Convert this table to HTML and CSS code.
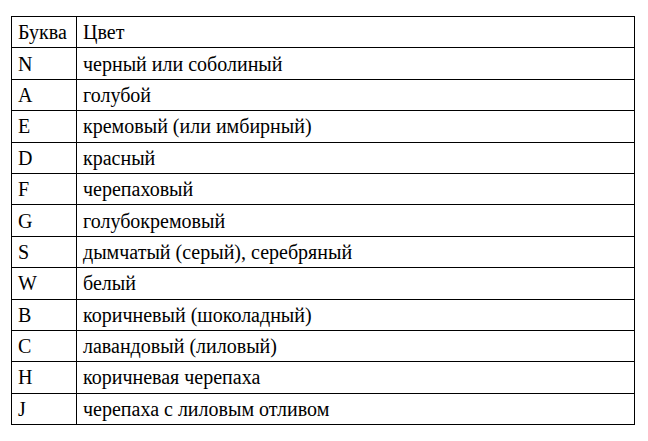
FILE: index.html
```html
<!DOCTYPE html>
<html lang="ru">
<head>
<meta charset="utf-8">
<link rel="stylesheet" href="styles.css">
</head>
<body>
<table class="colors">
<tr><td class="letter">Буква</td><td class="name">Цвет</td></tr>
<tr><td class="letter">N</td><td class="name">черный или соболиный</td></tr>
<tr><td class="letter">A</td><td class="name">голубой</td></tr>
<tr><td class="letter">E</td><td class="name">кремовый (или имбирный)</td></tr>
<tr><td class="letter">D</td><td class="name">красный</td></tr>
<tr><td class="letter">F</td><td class="name">черепаховый</td></tr>
<tr><td class="letter">G</td><td class="name">голубокремовый</td></tr>
<tr><td class="letter">S</td><td class="name">дымчатый (серый), серебряный</td></tr>
<tr><td class="letter">W</td><td class="name">белый</td></tr>
<tr><td class="letter">B</td><td class="name">коричневый (шоколадный)</td></tr>
<tr><td class="letter">C</td><td class="name">лавандовый (лиловый)</td></tr>
<tr><td class="letter">H</td><td class="name">коричневая черепаха</td></tr>
<tr><td class="letter">J</td><td class="name">черепаха с лиловым отливом</td></tr>
</table>
</body>
</html>
```
FILE: styles.css
```css
html, body {
  margin: 0;
  background: #fff;
}
body {
  padding: 16px 0 0 11px;
  font-family: "Liberation Serif", "Times New Roman", serif;
  font-size: 20px;
  color: #000;
}
.colors {
  border-collapse: collapse;
  width: 624px;
}
.colors td {
  border: 1px solid #000;
  height: 31.4px;
  padding: 0 6px;
  box-sizing: border-box;
  vertical-align: middle;
  line-height: 22px;
}
.colors .letter {
  width: 65px;
}
```
